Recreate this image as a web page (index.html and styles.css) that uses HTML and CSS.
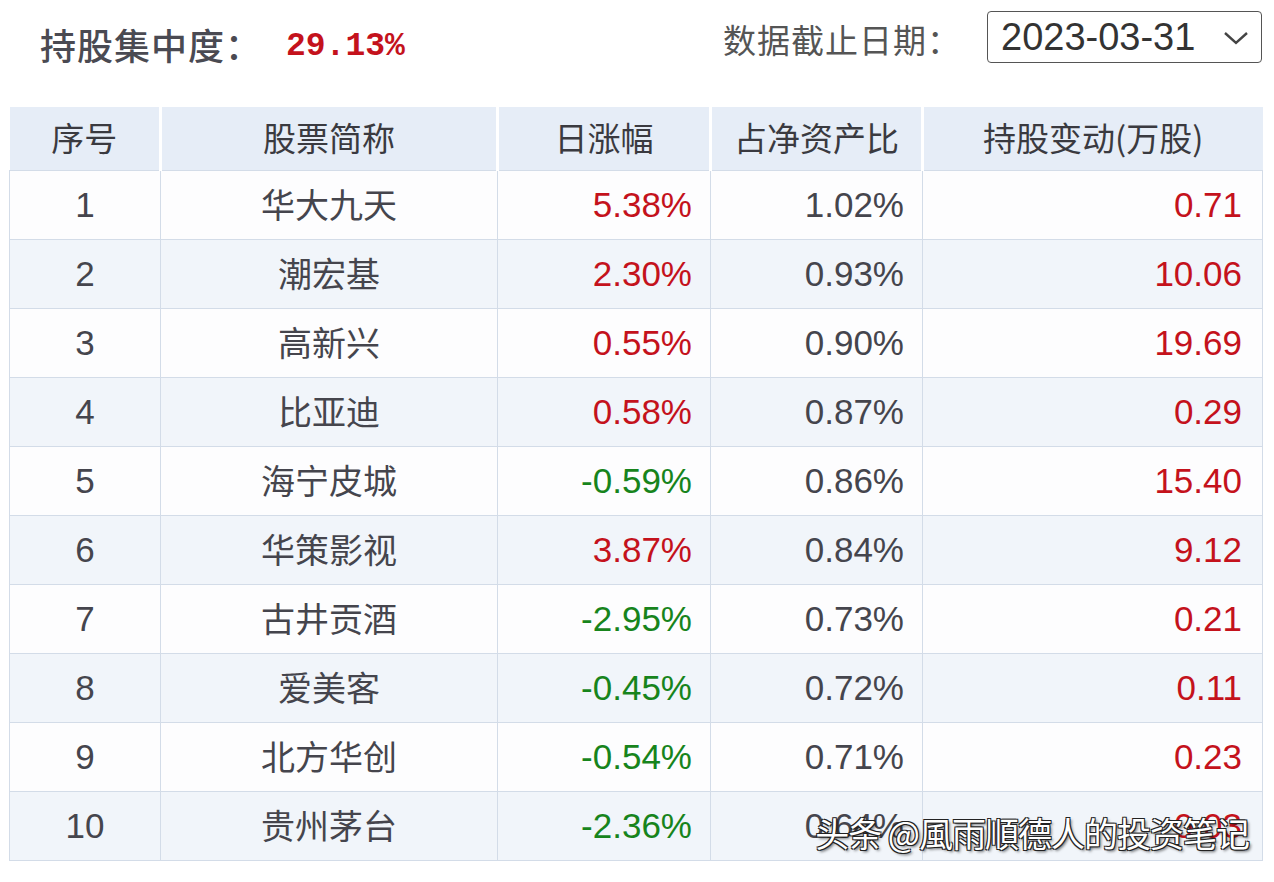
FILE: index.html
```html
<!DOCTYPE html>
<html lang="zh-CN">
<head>
<meta charset="utf-8">
<title>持股集中度</title>
<link rel="stylesheet" href="styles.css">
</head>
<body>
<div class="page">
  <div class="topbar">
    <div class="conc">
      <span class="conc-label">持股集中度：</span>
      <span class="conc-value">29.13%</span>
    </div>
    <div class="date">
      <span class="date-label">数据截止日期：</span>
      <div class="select">
        <span class="select-text">2023-03-31</span>
        <svg class="chev" width="26" height="14" viewBox="0 0 26 14"><path d="M2 2 L13 12 L24 2" fill="none" stroke="#444" stroke-width="2.4"/></svg>
      </div>
    </div>
  </div>
  <div class="table-wrap">
    <table class="holdings">
      <colgroup>
        <col class="c1"><col class="c2"><col class="c3"><col class="c4"><col class="c5">
      </colgroup>
      <thead>
        <tr><th>序号</th><th>股票简称</th><th>日涨幅</th><th>占净资产比</th><th>持股变动(万股)</th></tr>
      </thead>
      <tbody>
        <tr><td class="idx">1</td><td class="name">华大九天</td><td class="num up">5.38%</td><td class="num">1.02%</td><td class="num up">0.71</td></tr>
        <tr><td class="idx">2</td><td class="name">潮宏基</td><td class="num up">2.30%</td><td class="num">0.93%</td><td class="num up">10.06</td></tr>
        <tr><td class="idx">3</td><td class="name">高新兴</td><td class="num up">0.55%</td><td class="num">0.90%</td><td class="num up">19.69</td></tr>
        <tr><td class="idx">4</td><td class="name">比亚迪</td><td class="num up">0.58%</td><td class="num">0.87%</td><td class="num up">0.29</td></tr>
        <tr><td class="idx">5</td><td class="name">海宁皮城</td><td class="num down">-0.59%</td><td class="num">0.86%</td><td class="num up">15.40</td></tr>
        <tr><td class="idx">6</td><td class="name">华策影视</td><td class="num up">3.87%</td><td class="num">0.84%</td><td class="num up">9.12</td></tr>
        <tr><td class="idx">7</td><td class="name">古井贡酒</td><td class="num down">-2.95%</td><td class="num">0.73%</td><td class="num up">0.21</td></tr>
        <tr><td class="idx">8</td><td class="name">爱美客</td><td class="num down">-0.45%</td><td class="num">0.72%</td><td class="num up">0.11</td></tr>
        <tr><td class="idx">9</td><td class="name">北方华创</td><td class="num down">-0.54%</td><td class="num">0.71%</td><td class="num up">0.23</td></tr>
        <tr><td class="idx">10</td><td class="name">贵州茅台</td><td class="num down">-2.36%</td><td class="num">0.64%</td><td class="num up">0.03</td></tr>
      </tbody>
    </table>
    <div class="watermark">头条 @風雨順德人的投资笔记</div>
  </div>
</div>
</body>
</html>
```
FILE: styles.css
```css
html, body {
  margin: 0;
  padding: 0;
  background: #ffffff;
}
body {
  font-family: "Liberation Sans", "Noto Sans CJK SC", sans-serif;
  color: #333;
}
.page {
  width: 1274px;
  height: 882px;
  box-sizing: border-box;
  padding: 0 12px 0 9px;
}
.topbar {
  height: 107px;
  display: flex;
  align-items: flex-start;
  justify-content: space-between;
}
.conc {
  margin-top: 18px;
  margin-left: 31px;
  display: flex;
  align-items: center;
}
.conc-label {
  font-family: "Noto Sans CJK SC", sans-serif;
  font-size: 36px;
  font-weight: 500;
  color: #4a4a52;
  letter-spacing: 1px;
}
.conc-value {
  font-family: "Liberation Mono", "Noto Sans CJK SC", monospace;
  font-size: 33px;
  font-weight: 700;
  color: #c4121c;
  margin-left: 24px;
  margin-top: 4px;
}
.date {
  display: flex;
  align-items: center;
  margin-top: 11px;
}
.date-label {
  font-family: "Noto Sans CJK SC", sans-serif;
  font-size: 33px;
  letter-spacing: 1px;
  color: #555;
  margin-right: 26px;
  margin-top: 4px;
}
.select {
  width: 275px;
  height: 52px;
  box-sizing: border-box;
  border: 1.5px solid #555;
  border-radius: 4px;
  display: flex;
  align-items: center;
  justify-content: space-between;
  padding: 0 12px 0 13px;
}
.select-text {
  font-family: "Liberation Sans", sans-serif;
  font-size: 38px;
  color: #333;
}
.chev {
  display: block;
  margin-top: 2px;
}
.table-wrap {
  position: relative;
}
.holdings {
  width: 1253px;
  table-layout: fixed;
  border-collapse: collapse;
}
.c1 { width: 151px; }
.c2 { width: 337px; }
.c3 { width: 213px; }
.c4 { width: 212px; }
.c5 { width: 340px; }
.holdings th {
  height: 59px;
  padding: 0 0 4px 0;
  background: #e6edf7;
  border-left: 3px solid #ffffff;
  font-family: "Noto Sans CJK SC", sans-serif;
  font-weight: 400;
  font-size: 33px;
  color: #3a3a40;
  text-align: center;
}
.holdings th:first-child {
  border-left: 0;
}
.holdings td {
  height: 68px;
  padding: 0;
  border: 1px solid #d3dce8;
  font-size: 35px;
  color: #45454d;
}
.holdings tbody tr:nth-child(odd) td {
  background: #fdfdfe;
}
.holdings tbody tr:nth-child(even) td {
  background: #f1f5fa;
}
.holdings td.idx {
  text-align: center;
  font-family: "Liberation Sans", sans-serif;
}
.holdings td.name {
  text-align: center;
  font-family: "Noto Sans CJK SC", sans-serif;
  font-size: 34px;
  height: 64px;
  padding-bottom: 4px;
}
.holdings td.num {
  text-align: right;
  padding-right: 18px;
  font-family: "Liberation Sans", sans-serif;
}
.holdings td:last-child {
  padding-right: 20px;
}
.holdings td.up {
  color: #c4121c;
}
.holdings td.down {
  color: #17841c;
}
.watermark {
  position: absolute;
  right: 13px;
  bottom: 4px;
  font-family: "Noto Sans CJK SC", sans-serif;
  font-size: 34px;
  color: #ffffff;
  letter-spacing: -1px;
  text-shadow: 1px 1px 0 #222, -1px -1px 0 #222, 1px -1px 0 #222, -1px 1px 0 #222, 2px 2px 3px rgba(0,0,0,0.6);
}
```
